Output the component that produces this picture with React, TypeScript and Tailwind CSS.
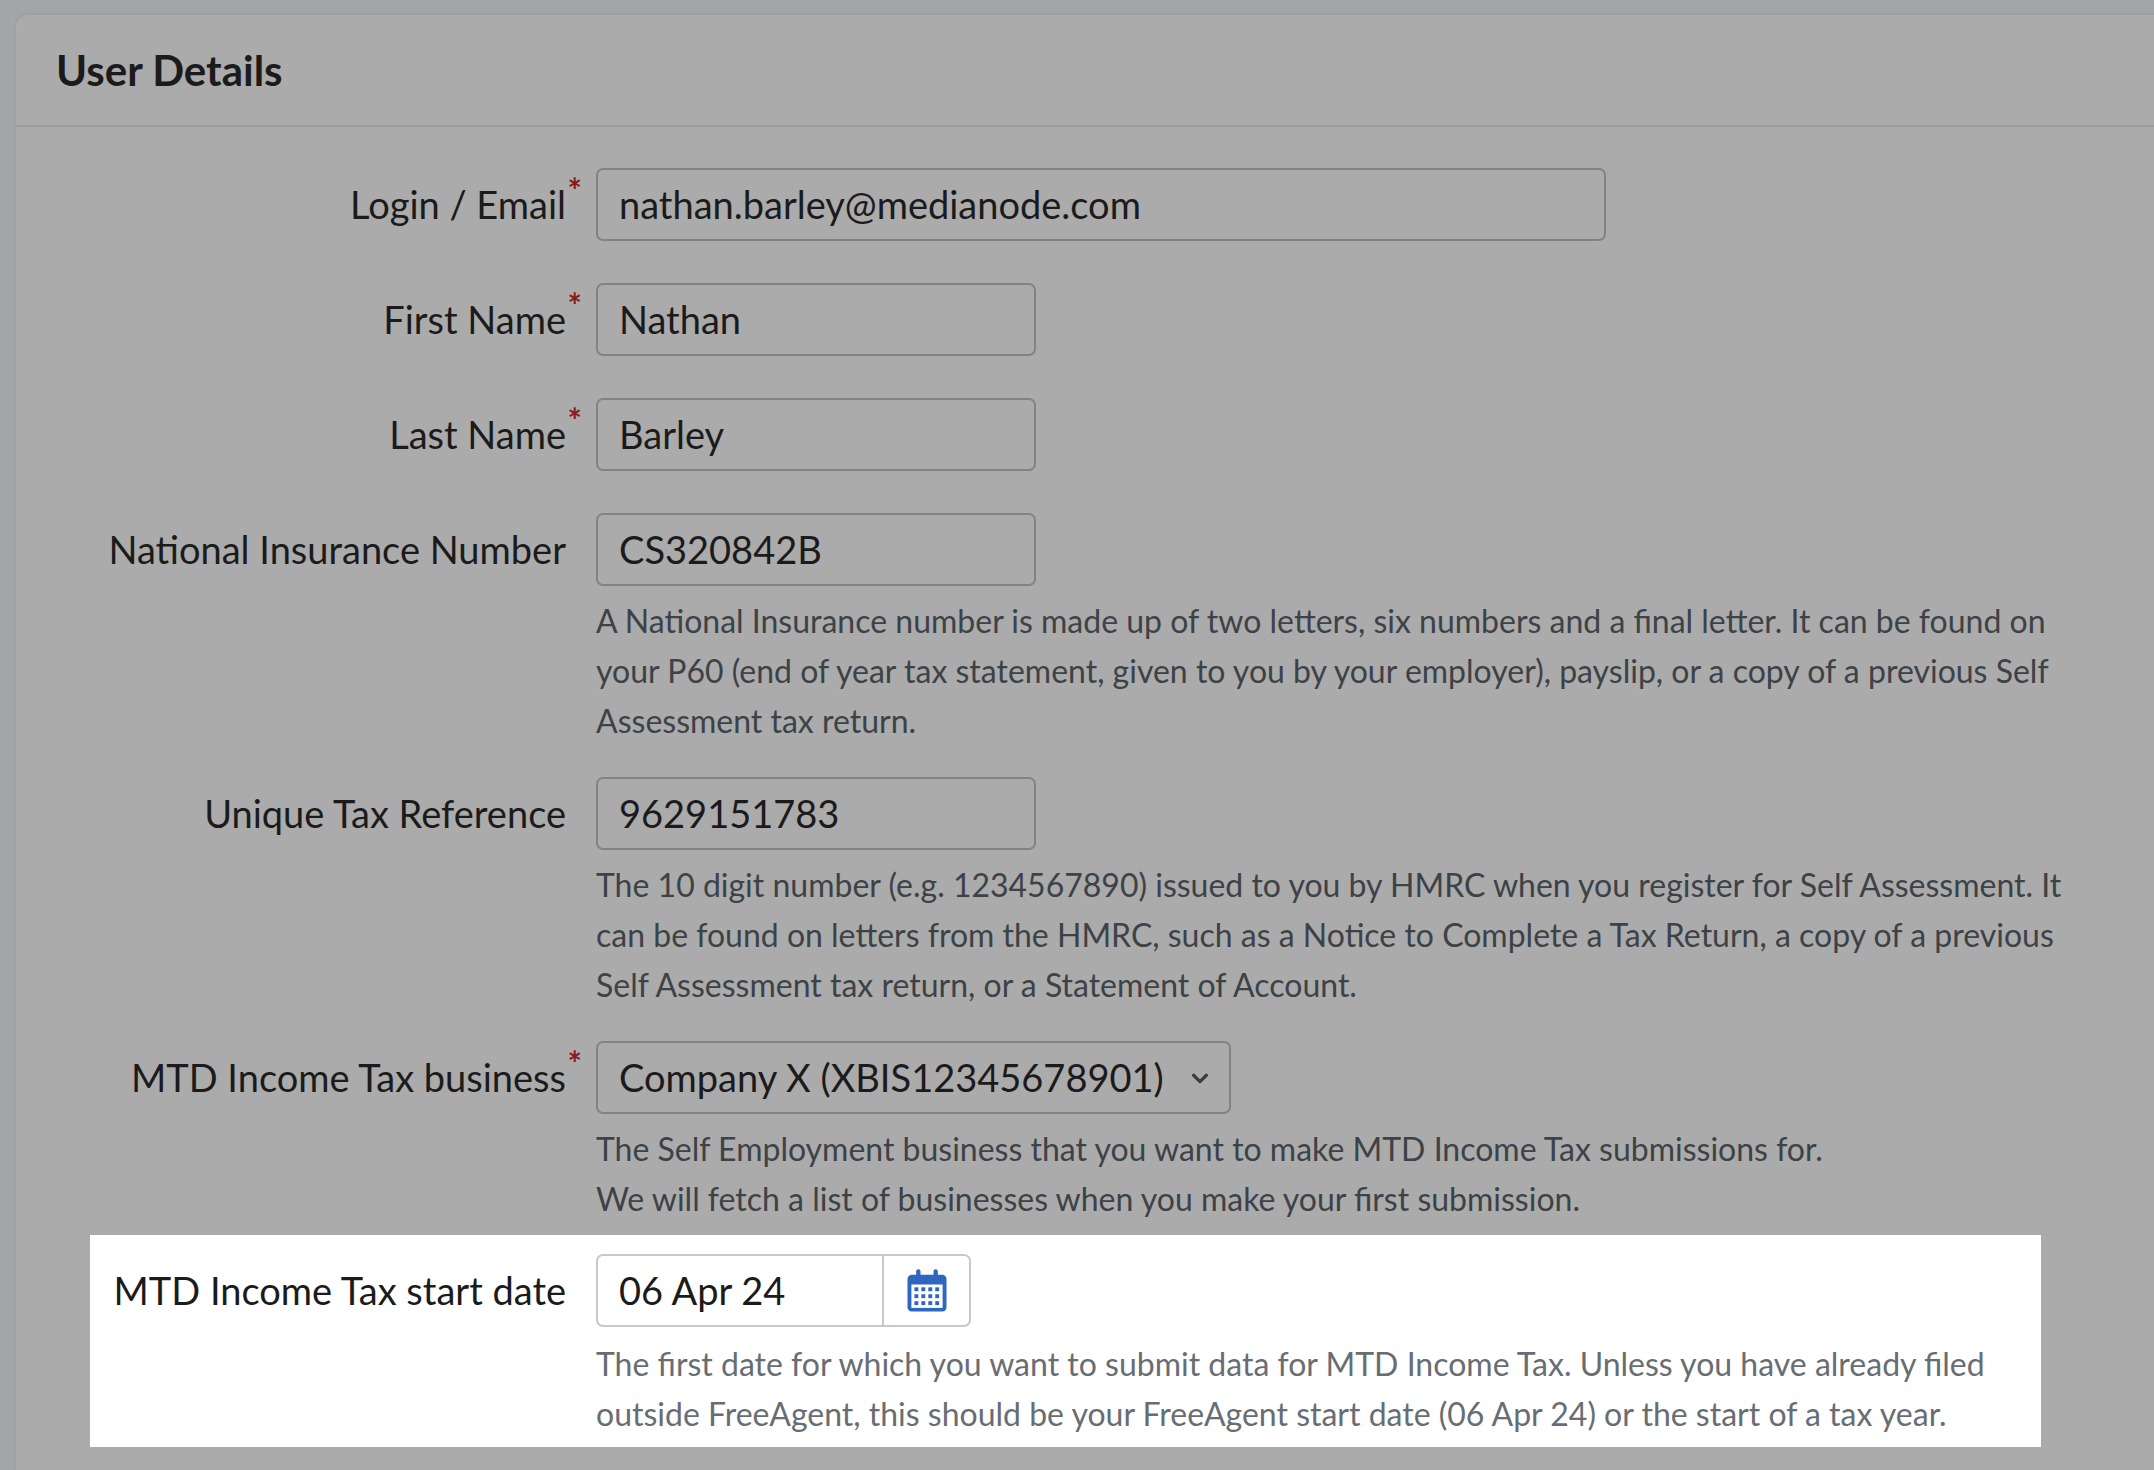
import React from "react";

const F = { fontFamily: "Lato, 'Noto Sans', sans-serif" };

function Star() {
  return <span className="absolute right-[-16px] top-[-12px] text-[34px] font-bold text-[#8b1a1a]">*</span>;
}

function Row({ label, req, children, help, mt }: { label: string; req?: boolean; children: React.ReactNode; help?: React.ReactNode; mt: string }) {
  return (
    <div className={`flex ${mt}`}>
      <div className="w-[550px] shrink-0 flex justify-end h-[73px] items-center">
        <span className="relative text-[38px] text-[#1b1b1b] whitespace-nowrap">{label}{req && <Star />}</span>
      </div>
      <div className="ml-[30px]">
        {children}
        {help && <div className="mt-[10px] text-[32px] leading-[50px] text-[#3d4247] whitespace-nowrap">{help}</div>}
      </div>
    </div>
  );
}

function Input({ value, w }: { value: string; w: string }) {
  return (
    <div className={`${w} h-[73px] border-2 border-[#80848a] rounded-[7px] flex items-center pl-[21px] text-[38px] text-[#1b1b1b]`}>{value}</div>
  );
}

export default function App() {
  return (
    <div style={F} className="w-[2154px] h-[1470px] bg-[#a3a5a8] overflow-hidden pt-[13px] pl-[14px]">
      <div className="h-[1500px] w-[2200px] bg-[#ababab] border-l-2 border-t-2 border-[#9ea0a3] rounded-tl-[14px]">
        <div className="h-[112px] border-b-2 border-[#9c9ea1] flex items-center pl-[40px]">
          <span className="text-[42px] font-bold text-[#1b1b1b]">User Details</span>
        </div>
        <div className="pt-[41px]">
          <Row label="Login / Email" req mt="">
            <Input value="nathan.barley@medianode.com" w="w-[1010px]" />
          </Row>
          <Row label="First Name" req mt="mt-[42px]">
            <Input value="Nathan" w="w-[440px]" />
          </Row>
          <Row label="Last Name" req mt="mt-[42px]">
            <Input value="Barley" w="w-[440px]" />
          </Row>
          <Row label="National Insurance Number" mt="mt-[42px]" help={<>A National Insurance number is made up of two letters, six numbers and a final letter. It can be found on<br />your P60 (end of year tax statement, given to you by your employer), payslip, or a copy of a previous Self<br />Assessment tax return.</>}>
            <Input value="CS320842B" w="w-[440px]" />
          </Row>
          <Row label="Unique Tax Reference" mt="mt-[31px]" help={<>The 10 digit number (e.g. 1234567890) issued to you by HMRC when you register for Self Assessment. It<br />can be found on letters from the HMRC, such as a Notice to Complete a Tax Return, a copy of a previous<br />Self Assessment tax return, or a Statement of Account.</>}>
            <Input value="9629151783" w="w-[440px]" />
          </Row>
          <Row label="MTD Income Tax business" req mt="mt-[31px]" help={<>The Self Employment business that you want to make MTD Income Tax submissions for.<br />We will fetch a list of businesses when you make your first submission.</>}>
            <div className="w-[635px] h-[73px] border-2 border-[#80848a] rounded-[7px] flex items-center justify-between pl-[21px] pr-[18px] text-[38px] text-[#1b1b1b]">
              <span>Company X (XBIS12345678901)</span>
              <svg width="22" height="22" viewBox="0 0 24 24" fill="none" stroke="#3a3d41" strokeWidth="3.5" strokeLinecap="round" strokeLinejoin="round"><path d="M5 9l7 7 7-7" /></svg>
            </div>
          </Row>
          <div className="ml-[74px] mt-[11px] w-[1951px] bg-white pt-[19px] pb-[8px] flex">
            <div className="w-[476px] shrink-0 flex justify-end h-[73px] items-center">
              <span className="text-[38px] text-[#1b1b1b] whitespace-nowrap">MTD Income Tax start date</span>
            </div>
            <div className="ml-[30px]">
              <div className="w-[375px] h-[73px] border-2 border-[#c5c8cc] rounded-[7px] flex">
                <div className="w-[286px] border-r-2 border-[#c5c8cc] flex items-center pl-[21px] text-[38px] text-[#1b1b1b]">06 Apr 24</div>
                <div className="flex-1 flex items-center justify-center">
                  <svg width="52" height="52" viewBox="0 0 24 24">
                    <rect x="3" y="4.5" width="18" height="17" rx="2" fill="#2f66c0" />
                    <rect x="7" y="2" width="2" height="5" rx="1" fill="#2f66c0" />
                    <rect x="15" y="2" width="2" height="5" rx="1" fill="#2f66c0" />
                    <rect x="4.8" y="9" width="14.4" height="10.8" fill="#fff" />
                    {[0, 1, 2].map(r => [0, 1, 2, 3].map(c => (
                      <rect key={`${r}${c}`} x={6.2 + c * 3.2} y={10.3 + r * 3.2} width="1.8" height="1.8" fill="#2f66c0" />
                    )))}
                  </svg>
                </div>
              </div>
              <div className="mt-[12px] text-[32px] leading-[50px] text-[#686d73] whitespace-nowrap">
                The first date for which you want to submit data for MTD Income Tax. Unless you have already filed<br />outside FreeAgent, this should be your FreeAgent start date (06 Apr 24) or the start of a tax year.
              </div>
            </div>
          </div>
        </div>
      </div>
    </div>
  );
}
